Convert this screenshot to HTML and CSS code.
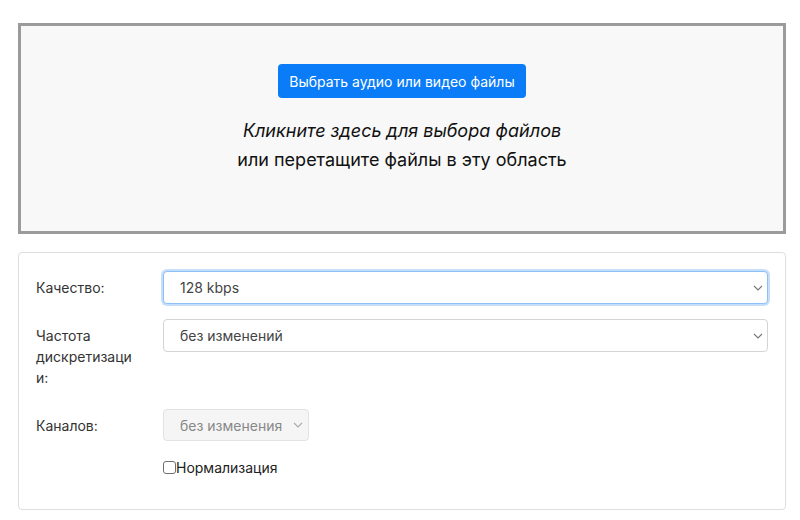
FILE: index.html
```html
<!DOCTYPE html>
<html lang="ru">
<head>
<meta charset="utf-8">
<link rel="stylesheet" href="styles.css">
</head>
<body>
<div class="page">
  <div class="dropzone">
    <button class="btn-primary" type="button">Выбрать аудио или видео файлы</button>
    <p class="hint"><em>Кликните здесь для выбора файлов</em><br>или перетащите файлы в эту область</p>
  </div>
  <form class="panel">
    <div class="row">
      <label class="label">Качество:</label>
      <div class="select-wrap select-full focused">
        <select class="select"><option>128 kbps</option></select>
        <svg class="chev" width="10" height="6" viewBox="0 0 10 6"><path d="M1 1l4 4 4-4" fill="none" stroke="#777" stroke-width="1.1"/></svg>
      </div>
    </div>
    <div class="row">
      <label class="label">Частота дискретизации:</label>
      <div class="select-wrap select-full">
        <select class="select"><option>без изменений</option></select>
        <svg class="chev" width="10" height="6" viewBox="0 0 10 6"><path d="M1 1l4 4 4-4" fill="none" stroke="#777" stroke-width="1.1"/></svg>
      </div>
    </div>
    <div class="row">
      <label class="label">Каналов:</label>
      <div class="select-wrap select-small">
        <select class="select" disabled><option>без изменения</option></select>
        <svg class="chev" width="10" height="6" viewBox="0 0 10 6"><path d="M1 1l4 4 4-4" fill="none" stroke="#aaa" stroke-width="1.1"/></svg>
      </div>
    </div>
    <div class="row">
      <span class="label"></span>
      <label class="check"><input type="checkbox" class="checkbox">Нормализация</label>
    </div>
  </form>
</div>
</body>
</html>
```

FILE: styles.css
```css
html, body {
  margin: 0;
  padding: 0;
  background: #fff;
}
body {
  font-family: Inter, "Noto Sans", "Liberation Sans", sans-serif;
  color: #212529;
}
.page {
  width: 768px;
  margin: 23px 0 0 18px;
}
.dropzone {
  box-sizing: border-box;
  height: 211px;
  border: 3px solid #9b9b9b;
  background: #f8f8f8;
  padding-top: 38px;
  text-align: center;
}
.btn-primary {
  height: 34px;
  padding: 0 11px;
  border: none;
  border-radius: 4px;
  background: #0a7cf7;
  color: #fff;
  font-family: inherit;
  font-size: 14px;
}
.hint {
  margin: 18px 0 0;
  font-size: 18px;
  line-height: 29px;
  color: #111;
}
.panel {
  margin-top: 18px;
  border: 1px solid #dedede;
  border-radius: 4px;
  padding: 18px 17px 16px;
}
.row {
  display: grid;
  grid-template-columns: 127px 1fr;
  align-items: start;
  margin-bottom: 15px;
}
.label {
  font-size: 14px;
  line-height: 21px;
  color: #333;
  padding: 6px 0;
  width: 100px;
  overflow-wrap: anywhere;
}
.select-wrap {
  position: relative;
}
.select-small {
  width: 146px;
}
.select {
  appearance: none;
  -webkit-appearance: none;
  box-sizing: border-box;
  width: 100%;
  height: 33px;
  border: 1px solid #d4d4d4;
  border-radius: 4px;
  background: #fff;
  padding: 0 26px 0 16px;
  font-family: inherit;
  font-size: 14px;
  color: #444;
  outline: none;
}
.select-small .select {
  height: 32px;
  background: #f5f5f5;
  border-color: #e3e3e3;
  padding-right: 8px;
}
.select:disabled {
  color: #888;
  opacity: 1;
}
.focused .select {
  border-color: #8cbff5;
  box-shadow: 0 0 0 2px rgba(90, 160, 240, 0.35);
}
.chev {
  position: absolute;
  right: 5px;
  top: 14px;
}
.select-small .chev {
  right: 6px;
  top: 13px;
}
.check {
  display: flex;
  align-items: center;
  font-size: 14px;
  line-height: 21px;
  color: #222;
}
.checkbox {
  appearance: none;
  -webkit-appearance: none;
  width: 13px;
  height: 13px;
  margin: 0;
  border: 1px solid #6f6f6f;
  border-radius: 3px;
  background: #fff;
  box-sizing: border-box;
}
```
